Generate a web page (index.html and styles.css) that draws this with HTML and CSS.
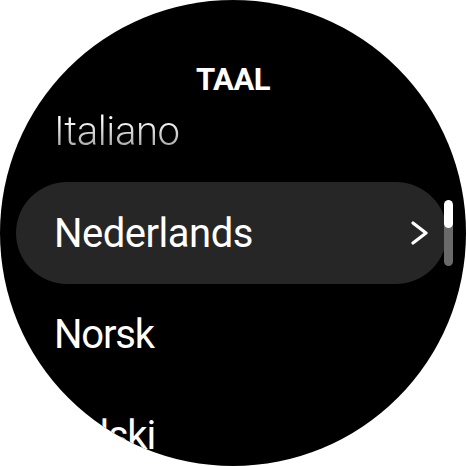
FILE: index.html
```html
<!DOCTYPE html>
<html lang="nl">
<head>
  <meta charset="UTF-8" />
  <meta name="viewport" content="width=device-width, initial-scale=1.0"/>
  <title>Taal</title>
  <link rel="stylesheet" href="styles.css">
</head>
<body>
  <div class="watch">
    <div class="title">TAAL</div>

    <ul class="list">
      <li class="item fading">Italiano</li>
      <li class="item selected">
        <span>Nederlands</span>
        <svg class="chevron" width="18" height="24" viewBox="0 0 18 24">
          <path d="M2 2 L15 12 L2 22" fill="none" stroke="#fff" stroke-width="3.2" stroke-linecap="round" stroke-linejoin="round"/>
        </svg>
      </li>
      <li class="item">Norsk</li>
      <li class="item">Polski</li>
    </ul>

    <div class="scrollbar">
      <div class="thumb"></div>
    </div>
  </div>
</body>
</html>
```

FILE: styles.css
```css
* {
  margin: 0;
  padding: 0;
  box-sizing: border-box;
}

body {
  width: 466px;
  height: 466px;
  background-color: #fff;
  font-family: Roboto, 'Liberation Sans', sans-serif;
  overflow: hidden;
}

.watch {
  position: relative;
  width: 466px;
  height: 466px;
  border-radius: 50%;
  background-color: #000;
  overflow: hidden;
  color: #fff;
}

.title {
  position: absolute;
  top: 56px;
  left: 0;
  right: 0;
  text-align: center;
  font-size: 31px;
  font-weight: 700;
  letter-spacing: -0.5px;
  line-height: 48px;
}

.list {
  list-style: none;
  padding-top: 81px;
}

.item {
  display: flex;
  align-items: center;
  justify-content: space-between;
  height: 101px;
  margin: 0 19px 0 16px;
  padding: 0 18px 0 38px;
  font-size: 40px;
  line-height: 101px;
  letter-spacing: -1.2px;
  white-space: nowrap;
}

/* top row fades out as it scrolls under the title */
.item.fading {
  font-weight: 300;
  letter-spacing: -0.4px;
  background: linear-gradient(to bottom, #fff 0, #fff 38px, #a8a8a8 66px, #909090 101px);
  -webkit-background-clip: text;
  background-clip: text;
  color: transparent;
}

.item.selected {
  background-color: #262626;
  border-radius: 51px;
  height: 102px;
  letter-spacing: -0.5px;
}

.chevron {
  display: block;
  flex-shrink: 0;
}

.scrollbar {
  position: absolute;
  left: 444px;
  top: 200px;
  width: 9px;
  height: 66px;
  border-radius: 5px;
  background-color: #6a6a6a;
  overflow: hidden;
}

.thumb {
  height: 28px;
  border-radius: 5px;
  background-color: #fff;
}
```
